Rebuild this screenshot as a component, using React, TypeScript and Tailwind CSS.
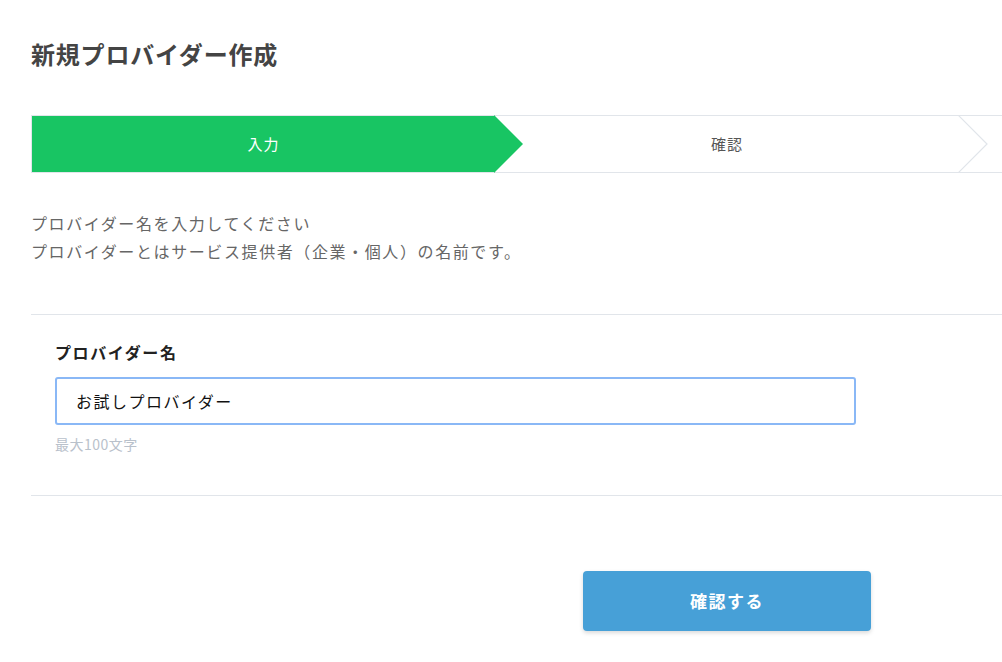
import { useState } from 'react';

const steps = ['入力', '確認', ''];

function Stepper({ active }: { active: number }) {
  return (
    <div className="flex h-[58px] border-y border-[#e1e5ea]">
      {steps.map((label, i) => {
        const isActive = i === active;
        return (
          <div
            key={i}
            className={`relative flex w-[464px] items-center justify-center ${
              isActive ? 'z-10 bg-[#18c563] text-white' : 'bg-white text-[#555]'
            } ${i === 0 ? 'border-l border-[#e1e5ea]' : ''}`}
          >
            <span className="text-[15px] tracking-[1px]">{label}</span>
            {/* arrow tip */}
            {i < steps.length - 1 && (
              <svg
                className="absolute -right-[29px] -top-px z-10"
                width="30"
                height="58"
                viewBox="0 0 30 58"
              >
                {isActive ? (
                  <polygon points="0,0 29,29 0,58" fill="#18c563" />
                ) : (
                  <polyline points="0,0 29,29 0,58" fill="none" stroke="#e1e5ea" strokeWidth="1.2" />
                )}
              </svg>
            )}
          </div>
        );
      })}
    </div>
  );
}

export default function App() {
  const [name, setName] = useState('お試しプロバイダー');

  return (
    <div
      className="min-h-screen w-full overflow-hidden bg-white text-[#555]"
      style={{ fontFamily: '"Noto Sans CJK JP", "Liberation Sans", sans-serif' }}
    >
      <div className="ml-[31px] w-[1392px]">
        <h1 className="pt-[37px] text-[24px] font-bold leading-[34px] tracking-[0.8px] text-[#444]">
          新規プロバイダー作成
        </h1>

        <div className="mt-[44px]">
          <Stepper active={0} />
        </div>

        <div className="mt-[36px] text-[16px] leading-[28px] tracking-[1.6px] text-[#666]">
          <p>プロバイダー名を入力してください</p>
          <p>プロバイダーとはサービス提供者（企業・個人）の名前です。</p>
        </div>

        {/* form section */}
        <section className="mt-[49px] border-y border-[#e1e5ea] px-6 pb-[40px] pt-[25px]">
          <label className="block text-[16px] font-bold leading-[24px] tracking-[1.6px] text-[#222]">
            プロバイダー名
          </label>
          <input
            value={name}
            onChange={(e) => setName(e.target.value)}
            className="mt-[13px] block h-[48px] w-[801px] rounded-[3px] border-2 border-[#8ab8f6] px-[19px] text-[16px] tracking-[1.5px] text-[#111] outline-none"
          />
          <p className="mt-[8px] text-[14px] leading-[22px] tracking-[0.5px] text-[#b9c1cb]">最大100文字</p>
        </section>

        <div className="flex justify-center pt-[75px]">
          <button className="h-[60px] w-[288px] rounded-[4px] bg-[#47a0d7] text-[17px] font-bold tracking-[1.5px] text-white shadow-[0_2px_4px_rgba(0,0,0,0.15)]">
            確認する
          </button>
        </div>
      </div>
    </div>
  );
}
